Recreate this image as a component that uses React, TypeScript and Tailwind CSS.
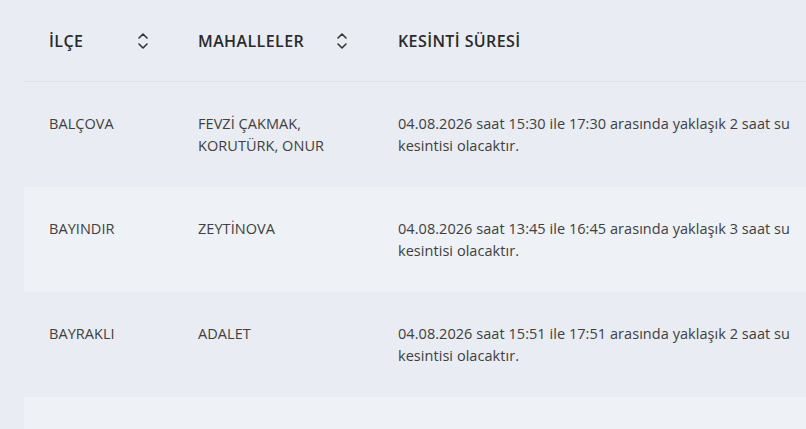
import React from "react";

const SortIcon = () => (
  <svg width="12" height="20" viewBox="0 0 12 20" fill="none" stroke="#333" strokeWidth="1.6" strokeLinecap="round" strokeLinejoin="round">
    <path d="M2 7 L6 3 L10 7" />
    <path d="M2 13 L6 17 L10 13" />
  </svg>
);

const rows = [
  { ilce: "BALÇOVA", mah: ["FEVZİ ÇAKMAK,", "KORUTÜRK, ONUR"], sure: ["04.08.2026 saat 15:30 ile 17:30 arasında yaklaşık 2 saat su", "kesintisi olacaktır."], striped: false },
  { ilce: "BAYINDIR", mah: ["ZEYTİNOVA"], sure: ["04.08.2026 saat 13:45 ile 16:45 arasında yaklaşık 3 saat su", "kesintisi olacaktır."], striped: true },
  { ilce: "BAYRAKLI", mah: ["ADALET"], sure: ["04.08.2026 saat 15:51 ile 17:51 arasında yaklaşık 2 saat su", "kesintisi olacaktır."], striped: false },
];

export default function App() {
  return (
    <div className="w-[806px] h-[429px] overflow-hidden bg-[#e9ecf3]" style={{ fontFamily: "'Open Sans', 'Noto Sans', sans-serif" }}>
      <div className="ml-[24px] w-[900px]">
        <div className="flex h-[82px] items-center border-b border-[#dde1ea] text-[16px] font-semibold tracking-[0.4px] text-[#2a2a2a]">
          <div className="w-[150px] pl-[25px] pr-[25px] flex items-center justify-between">
            <span>İLÇE</span>
            <SortIcon />
          </div>
          <div className="w-[200px] pl-[24px] pr-[26px] flex items-center justify-between">
            <span>MAHALLELER</span>
            <SortIcon />
          </div>
          <div className="pl-[24px]">KESİNTİ SÜRESİ</div>
        </div>
        {rows.map((r, i) => (
          <div key={i} className={`flex h-[105px] pt-[31px] text-[14.5px] tracking-[0.05px] leading-[22px] text-[#404040] ${r.striped ? "bg-[#eef1f6]" : ""}`}>
            <div className="w-[150px] pl-[25px]">{r.ilce}</div>
            <div className="w-[200px] pl-[24px]">
              {r.mah.map((m, j) => (
                <div key={j} className="whitespace-nowrap">{m}</div>
              ))}
            </div>
            <div className="pl-[24px]">
              {r.sure.map((s, j) => (
                <div key={j} className="whitespace-nowrap">{s}</div>
              ))}
            </div>
          </div>
        ))}
        <div className="h-[40px] bg-[#eef1f6]" />
      </div>
    </div>
  );
}
